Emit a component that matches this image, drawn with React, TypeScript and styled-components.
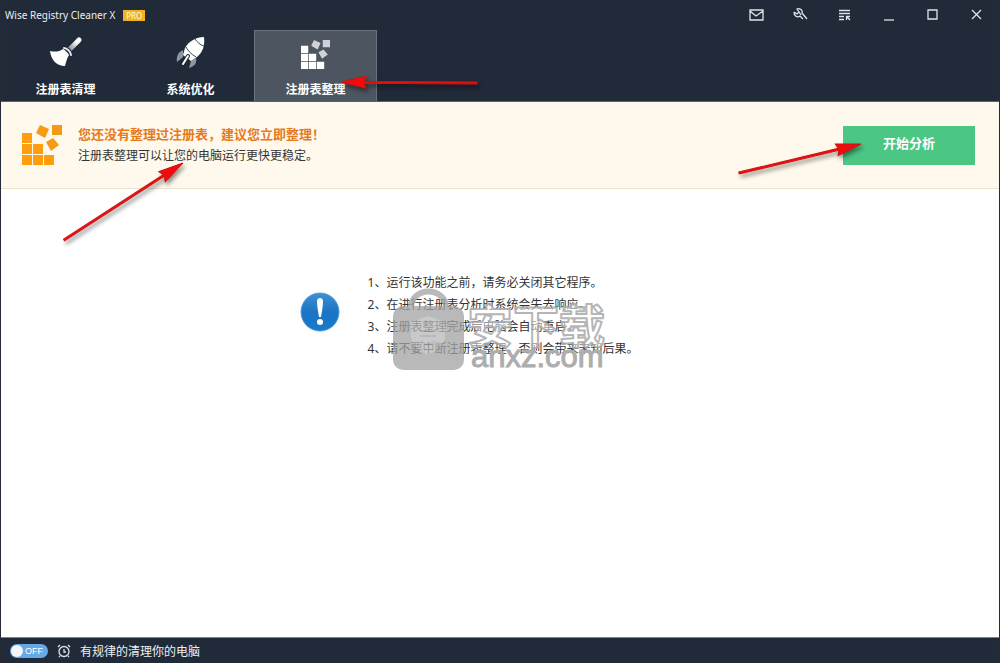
import React from "react";
import styled, { createGlobalStyle, css } from "styled-components";

const Global = createGlobalStyle`
  * { box-sizing: border-box; }
  body { margin: 0; font-family: "Noto Sans", "Noto Sans CJK SC", sans-serif; font-size: 12px; color: #333; }
  button { font: inherit; border: 0; padding: 0; background: none; color: inherit; cursor: pointer; }
  svg { display: block; }
`;

const Window = styled.div`
  position: relative;
  min-height: 100vh;
  display: flex;
  flex-direction: column;
  background: #fff;
  border: solid #252c38;
  border-width: 0 1px;
`;

const Header = styled.header`
  background: #212a39;
  color: #fff;
  border-bottom: 1px solid #5c626c;
`;

const TitleBar = styled.div`
  height: 30px;
  display: flex;
  align-items: center;
  justify-content: space-between;
  padding: 0 1px 0 4px;
`;

const Brand = styled.h1`
  margin: 0;
  display: flex;
  align-items: center;
  gap: 8px;
  font: 400 10px/16px "Noto Sans", sans-serif;
  color: #eceef2;
`;

const ProBadge = styled.span`
  background: #f0b41c;
  color: #fffbe8;
  font: 400 8px/11px "Noto Sans", sans-serif;
  width: 22px;
  text-align: center;
`;

const Controls = styled.div`
  display: flex;
`;

const ControlButton = styled.button`
  && {
    width: 44px;
    height: 30px;
    padding-bottom: 2px;
    display: grid;
    place-items: center;
  }
`;

const Tabs = styled.nav`
  display: flex;
  gap: 2px;
  padding-left: 3px;
`;

const IconSlot = styled.span`
  height: 34px;
  display: flex;
  align-items: flex-end;
`;

const Tab = styled.button<{ $active?: boolean }>`
  && {
    width: 123px;
    height: 71px;
    display: flex;
    flex-direction: column;
    align-items: center;
    justify-content: space-between;
    padding: 4px 0 2px;
    font-weight: 700;
    line-height: 18px;
    border: 1px solid transparent;
    border-bottom: 0;
    ${(p) => p.$active && css`
      background: #4d5561;
      border-color: #6b727d;
    `}
  }
`;

const Banner = styled.section`
  display: flex;
  align-items: center;
  min-height: 87px;
  padding: 0 24px 0 21px;
  background: #fef9ec;
  border-bottom: 1px solid #ebe3cd;
`;

const BannerText = styled.div`
  flex: 1;
  margin-left: 16px;
  line-height: 22px;
`;

const BannerTitle = styled.h2`
  margin: 0;
  font-size: 13px;
  line-height: 22px;
  color: #e67a1c;
`;

const BannerNote = styled.p`
  margin: 0;
`;

const StartButton = styled.button`
  && {
    width: 132px;
    height: 39px;
    padding-bottom: 5px;
    background: #4bc683;
    color: #fff;
    font-size: 13px;
    font-weight: 700;
  }
`;

const Main = styled.main`
  flex: 1;
  display: flex;
  justify-content: center;
  align-items: flex-start;
  gap: 28px;
  padding: 83px 62px 0 0;
`;

const InfoMark = styled.svg`
  margin-top: 20px;
`;

const Tips = styled.ol`
  list-style: none;
  margin: 0;
  padding: 0;
  line-height: 22px;
  white-space: nowrap;
`;

const Footer = styled.footer`
  height: 26px;
  display: flex;
  align-items: center;
  gap: 9px;
  padding: 1px 9px 0;
  background: #212a39;
  border-top: 1px solid #80858d;
  color: #eef0f3;
`;

const Toggle = styled.label`
  position: relative;
  width: 38px;
  height: 14px;
  border-radius: 7px;
  background: #65aae6;
  color: #fff;
  font: 400 9px/14px "Liberation Sans", sans-serif;
  text-align: right;
  padding-right: 5px;
`;

const ToggleInput = styled.input`
  position: absolute;
  inset: 1px auto auto 1px;
  appearance: none;
  width: 12px;
  height: 12px;
  margin: 0;
  border-radius: 50%;
  background: #f4f6f9;
`;

const Overlay = styled.svg`
  position: absolute;
  left: 0;
  top: 0;
  pointer-events: none;
`;

const Arrow = styled.g`
  filter: drop-shadow(2px 3px 2px rgba(0, 0, 0, 0.45));
`;

const WatermarkBox = styled.div`
  position: absolute;
  left: 390px;
  top: 288px;
  pointer-events: none;
`;

const Broom = () => (
  <svg width="34" height="34" viewBox="0 0 34 34" aria-hidden="true">
    <defs>
      <linearGradient id="handle" gradientUnits="userSpaceOnUse" x1="20" y1="15" x2="30" y2="5">
        <stop offset="0" stopColor="#7d8490" />
        <stop offset="0.8" stopColor="#fff" />
      </linearGradient>
    </defs>
    <path d="M20 15 30 5" stroke="url(#handle)" strokeWidth="5" strokeLinecap="round" />
    <path d="M15 13c3 0 7 4 7 7" stroke="#212a39" strokeWidth="4" fill="none" />
    <path d="M15 13c3 0 7 4 7 7" stroke="#e9ebee" strokeWidth="2" strokeLinecap="round" fill="none" />
    <path d="M1 16c5 1 9 1 13-2 2 1 5 4 6 6-2 3-3 7-4 11C8 31 2 25 1 16Z" fill="#fff" />
  </svg>
);

const Rocket = () => (
  <svg width="34" height="34" viewBox="0 0 34 34" aria-hidden="true">
    <path d="M9 15c-5 2-7 7-6 12l6-5ZM22 23c1 5-1 8-7 10l2-7Z" fill="#8d96a3" />
    <path d="M30 2c1 8-1 15-7 20l-6 4-8-6 2-7C15 6 22 2 30 2Z" fill="#fff" />
    <path d="M21 4c2 3 5 6 9 7M12 12c2 4 5 7 10 10" stroke="#3c4554" fill="none" />
    <path d="m14 21-5 8" stroke="#212a39" strokeWidth="4" strokeLinecap="round" />
    <path d="m14 21-5 8" stroke="#fff" strokeWidth="2" strokeLinecap="round" />
  </svg>
);

const Blocks = ({ size, color, fade }: { size: number; color: string; fade: string }) => (
  <svg width={size} height={size} viewBox="0 0 40 40" fill={color} aria-hidden="true">
    <path d="M0 8h10v10H0zM0 19h10v10H0zM11 19h10v10H11zM0 30h10v10H0zM11 30h10v10H11zM22 30h10v10H22z" />
    <g fill={fade}>
      <path d="M30 0h10v10H30z" />
      <path d="m18 0 9 4-4 9-9-5zM31 13l6 7-8 6-5-9z" />
    </g>
  </svg>
);

const arrows = [
  { x1: 476, y1: 83, x2: 340, y2: 82 },
  { x1: 63, y1: 240, x2: 182, y2: 163 },
  { x1: 738, y1: 173, x2: 860, y2: 144 },
];

const Arrows = () => (
  <Overlay width="998" height="300" aria-hidden="true">
    {arrows.map((a) => {
      const length = Math.hypot(a.x2 - a.x1, a.y2 - a.y1);
      const angle = (Math.atan2(a.y2 - a.y1, a.x2 - a.x1) * 180) / Math.PI;
      return (
        <Arrow key={a.x1}>
          <path
            transform={`translate(${a.x1} ${a.y1}) rotate(${angle})`}
            d={`M0-1H${length - 23}L${length - 25}-6L${length} 0L${length - 25} 6L${length - 23} 1H0Z`}
            fill="#f00c0c"
            stroke="#d01212"
          />
        </Arrow>
      );
    })}
  </Overlay>
);

const Watermark = () => (
  <WatermarkBox aria-hidden="true">
    <svg width="220" height="86" viewBox="0 0 220 86">
      <g opacity="0.75">
        <path d="M20 19a17 15 0 0 1 35 0" fill="none" stroke="#a2a2a2" strokeWidth="6" />
        <rect x="2" y="18" width="71" height="64" rx="10" fill="#a2a2a2" />
        <path d="M37 28l17 6v14c0 9-8 14-17 19-9-5-17-10-17-19V34Z" fill="#b8b8b8" />
        <path d="M29 43h16M29 48h16M30 53q7 7 14 0" stroke="#a2a2a2" strokeWidth="2" fill="none" />
      </g>
      <text
        x="76" y="55" fontFamily="Noto Sans CJK SC, sans-serif" fontWeight="700" fontSize="46"
        fill="#fff" fillOpacity="0.5" stroke="#a8a8a8" strokeOpacity="0.85" strokeWidth="2" strokeLinejoin="round"
      >安下载</text>
      <text
        x="80" y="79" fontFamily="Liberation Sans, sans-serif" fontSize="31"
        fill="#adadad" stroke="#adadad" strokeWidth="1"
      >anxz.com</text>
    </svg>
  </WatermarkBox>
);

const tips = [
  "1、运行该功能之前，请务必关闭其它程序。",
  "2、在进行注册表分析时系统会失去响应。",
  "3、注册表整理完成后电脑会自动重启。",
  "4、请不要中断注册表整理，否则会带来未知后果。",
];

const controls = [
  { name: "反馈", art: <path d="M1 3H14V13H1ZM1 4 7 9 14 4" /> },
  { name: "工具", art: <path d="M1 5 4 7 6 5 4 2C7 1 10 3 9 6L14 12M1 5C1 9 4 11 7 9L10 12M6 5 8 8" /> },
  { name: "菜单", art: <path d="M2 3.500H13M2 6.500H13M2 9.500H7M2 12.500H7M9.500 13V9.500H13M9.500 9.500 13 13" /> },
  { name: "最小化", art: <path d="M3 13H13" /> },
  { name: "最大化", art: <path d="M3 3H12V12H3Z" /> },
  { name: "关闭", art: <path d="M3 3 12 12M12 3 3 12" /> },
];

export default function App() {
  return (
    <Window>
      <Global />
      <Header>
        <TitleBar>
          <Brand>Wise Registry Cleaner X <ProBadge>PRO</ProBadge></Brand>
          <Controls>
            {controls.map((c) => (
              <ControlButton key={c.name} aria-label={c.name}>
                <svg width="15" height="15" viewBox="0 0 15 15" fill="none" stroke="#dfe3e9" strokeWidth="1.3">{c.art}</svg>
              </ControlButton>
            ))}
          </Controls>
        </TitleBar>
        <Tabs>
          <Tab><IconSlot><Broom /></IconSlot>注册表清理</Tab>
          <Tab><IconSlot><Rocket /></IconSlot>系统优化</Tab>
          <Tab $active><IconSlot><Blocks size={29} color="#fff" fade="#cfd2d6" /></IconSlot>注册表整理</Tab>
        </Tabs>
      </Header>
      <Banner>
        <Blocks size={40} color="#ff9e0d" fade="#f59a14" />
        <BannerText>
          <BannerTitle>您还没有整理过注册表，建议您立即整理！</BannerTitle>
          <BannerNote>注册表整理可以让您的电脑运行更快更稳定。</BannerNote>
        </BannerText>
        <StartButton>开始分析</StartButton>
      </Banner>
      <Main>
        <InfoMark width="40" height="40" viewBox="0 0 40 40" aria-hidden="true">
          <defs>
            <linearGradient id="info" x1="0" y1="0" x2="0" y2="1">
              <stop offset="0" stopColor="#3f8fd3" />
              <stop offset="0.5" stopColor="#1c74c4" />
              <stop offset="1" stopColor="#1a78cc" />
            </linearGradient>
          </defs>
          <circle cx="20" cy="20" r="19" fill="url(#info)" stroke="#4a9bd8" />
          <path d="M17 9c0-4 6-4 6 0 0 5-1 10-2 16h-2C18 19 17 14 17 9Z" fill="#fff" />
          <circle cx="20" cy="30" r="3" fill="#fff" />
        </InfoMark>
        <Tips>{tips.map((t) => <li key={t}>{t}</li>)}</Tips>
      </Main>
      <Footer>
        <Toggle><ToggleInput type="checkbox" aria-label="定期清理" />OFF</Toggle>
        <svg width="14" height="14" viewBox="0 0 14 14" fill="none" stroke="#dfe3e9" strokeWidth="1.3" aria-hidden="true">
          <circle cx="7" cy="7.500" r="5" /><path d="M7 5V8H9M1 3 3 1M13 3 11 1M3 12 2 13M11 12 12 13" />
        </svg>
        <span>有规律的清理你的电脑</span>
      </Footer>
      <Watermark />
      <Arrows />
    </Window>
  );
}
